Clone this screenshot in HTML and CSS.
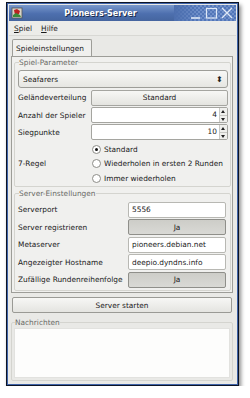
FILE: index.html
```html
<!DOCTYPE html>
<html>
<head>
<meta charset="utf-8">
<link rel="stylesheet" href="styles.css">
</head>
<body>
<div class="window">
  <div class="titlebar">
    <svg class="appicon" width="12" height="12" viewBox="0 0 12 12">
      <rect x="1" y="1" width="10" height="10" fill="#d8d4c8" stroke="#555" stroke-width="0.8"/>
      <path d="M3 3 L6 2 L9 4 L8 7 L4 8 Z" fill="#b22"/>
      <path d="M2 8 L5 6 L9 8 L10 10 L2 10 Z" fill="#3a8a3a"/>
    </svg>
    <span class="title">Pioneers-Server</span>
    <div class="wmbtns">
      <svg width="48" height="14" viewBox="0 0 48 14">
        <path d="M3 12 H12" stroke="#dfe8f6" stroke-width="1.6"/>
        <rect x="18.5" y="2.5" width="10" height="9.5" fill="none" stroke="#dfe8f6" stroke-width="1.2"/>
        <path d="M34 2 L44 12 M44 2 L34 12" stroke="#dfe8f6" stroke-width="1.3"/>
      </svg>
    </div>
  </div>
  <div class="menubar">
    <span class="menu"><u>S</u>piel</span>
    <span class="menu"><u>H</u>ilfe</span>
  </div>
  <div class="main">
    <div class="notebook">
      <div class="tabs"><div class="tab">Spieleinstellungen</div></div>
      <div class="page">
        <fieldset class="frame f1">
          <legend>Spiel-Parameter</legend>
          <div class="combo"><span>Seafarers</span><span class="updown">&#x2B0D;</span></div>
          <div class="grid g1">
            <div class="lbl">Geländeverteilung</div>
            <div class="btn">Standard</div>
            <div class="lbl">Anzahl der Spieler</div>
            <div class="spin"><span class="val">4</span><span class="arr"><i class="up"></i><i class="dn"></i></span></div>
            <div class="lbl">Siegpunkte</div>
            <div class="spin"><span class="val">10</span><span class="arr"><i class="up"></i><i class="dn"></i></span></div>
            <div class="lbl seven">7-Regel</div>
            <div class="radios">
              <div class="radio"><span class="dot on"></span>Standard</div>
              <div class="radio"><span class="dot"></span>Wiederholen in ersten 2 Runden</div>
              <div class="radio"><span class="dot"></span>Immer wiederholen</div>
            </div>
          </div>
        </fieldset>
        <fieldset class="frame f2">
          <legend>Server-Einstellungen</legend>
          <div class="grid g2">
            <div class="lbl">Serverport</div>
            <div class="entry">5556</div>
            <div class="lbl">Server registrieren</div>
            <div class="btn toggled">Ja</div>
            <div class="lbl">Metaserver</div>
            <div class="entry">pioneers.debian.net</div>
            <div class="lbl">Angezeigter Hostname</div>
            <div class="entry">deepio.dyndns.info</div>
            <div class="lbl">Zufällige Rundenreihenfolge</div>
            <div class="btn toggled">Ja</div>
          </div>
        </fieldset>
      </div>
    </div>
    <div class="btn start">Server starten</div>
    <fieldset class="frame msgs">
      <legend>Nachrichten</legend>
      <div class="textarea"></div>
    </fieldset>
  </div>
</div>
</body>
</html>
```

FILE: styles.css
```css
* { box-sizing: border-box; }
html, body { margin: 0; padding: 0; background: #ffffff; }
body {
  padding: 2px 0 0 6px;
  font-family: "DejaVu Sans", sans-serif;
  font-size: 7.4px;
  color: #1a1a1a;
}
.window {
  width: 233px;
  height: 384px;
  border: 1px solid #0c1426;
  box-shadow: inset 0 0 0 1px #3f63a8, 2px 3px 4px rgba(0,0,0,0.45);
  background: #e9e9e6;
  padding: 2px;
  display: flex;
  flex-direction: column;
}
.titlebar {
  height: 16px;
  display: flex;
  align-items: center;
  background: linear-gradient(#7897cb, #4d6fae 55%, #45659f);
  color: #fff;
  padding-left: 2px;
}
.appicon { flex: none; }
.title {
  flex: 1;
  text-align: center;
  font-weight: bold;
  font-size: 8px;
  text-shadow: 1px 1px 0 #1d2c4c;
  padding-left: 4px;
}
.wmbtns {
  flex: none;
  width: 62px;
  height: 16px;
  display: flex;
  justify-content: flex-end;
  align-items: center;
  background:
    linear-gradient(90deg, rgba(77,111,174,1), rgba(77,111,174,0) 40%),
    repeating-conic-gradient(#6f8fca 0 25%, #5276b8 0 50%) 0 0 / 4px 4px;
}
.menubar {
  height: 15px;
  display: flex;
  align-items: center;
  gap: 9px;
  padding-left: 5px;
  background: #ecece9;
  border-bottom: 1px solid #d8d8d4;
}
.menu u { text-decoration: underline; text-underline-offset: 1px; }
.main {
  flex: 1;
  min-width: 0;
  display: flex;
  flex-direction: column;
  padding: 3px 3px 2px 2px;
}
.notebook { display: flex; flex-direction: column; min-width: 0; }
.tabs { display: flex; padding-left: 1px; height: 17px; }
.tab {
  height: 17px;
  padding: 4px 4px 0 3px;
  background: #f0f0ee;
  border: 1px solid #9d9d98;
  border-bottom: none;
  border-radius: 2px 2px 0 0;
  position: relative;
  z-index: 1;
  margin-bottom: -1px;
  width: 80px;
}
.page {
  background: #f0f0ee;
  border: 1px solid #9d9d98;
  padding: 1px 1px 1px 2px;
  display: flex;
  flex-direction: column;
  min-width: 0;
}
.frame {
  margin: 0;
  padding: 2px 2px 2px 3px;
  border: 1px solid #d4d4cf;
  border-radius: 2px;
  min-width: 0;
}
.f1 { padding-bottom: 0; }
.frame legend {
  padding: 0;
  margin-left: 1px;
  color: #6a6a66;
  line-height: 9px;
}
.combo {
  height: 18px;
  margin: 1px 0 1px 0;
  display: flex;
  justify-content: space-between;
  align-items: center;
  padding: 0 4px 0 4px;
  border: 1px solid #9d9d98;
  border-radius: 3px;
  background: linear-gradient(#f8f8f6, #e6e6e2);
}
.updown { font-size: 8px; color: #222; }
.grid {
  display: grid;
  align-items: center;
}
.g1 {
  grid-template-columns: 73px minmax(0, 1fr);
  grid-template-rows: 17px 16px 16px 45px;
  row-gap: 1px;
}
.g2 {
  grid-template-columns: 110px minmax(0, 1fr);
  grid-template-rows: repeat(5, 17px);
  row-gap: 0.5px;
  margin-top: 1px;
  padding-right: 2px;
}
.lbl { white-space: nowrap; }
.btn {
  height: 16px;
  display: flex;
  align-items: center;
  justify-content: center;
  border: 1px solid #a5a5a0;
  border-radius: 2px;
  background: linear-gradient(#f7f7f5, #e4e4e0);
}
.btn.toggled {
  background: linear-gradient(#cdcdc8, #d9d9d5);
  border-color: #8f8f8a;
}
.spin {
  height: 16px;
  display: flex;
  border: 1px solid #a5a5a0;
  border-radius: 2px;
  background: #fff;
}
.spin .val { flex: 1; text-align: right; padding-right: 2px; line-height: 14px; }
.spin .arr {
  width: 8px;
  display: flex;
  flex-direction: column;
  border-left: 1px solid #c8c8c4;
  background: #efefec;
}
.spin i { flex: 1; position: relative; }
.spin i.up::after, .spin i.dn::after {
  content: "";
  position: absolute;
  left: 1px;
  border-left: 2px solid transparent;
  border-right: 2px solid transparent;
}
.spin i.up::after { top: 2px; border-bottom: 3px solid #222; }
.spin i.dn::after { top: 2px; border-top: 3px solid #222; }
.spin i.up { border-bottom: 1px solid #c8c8c4; }
.radios { display: flex; flex-direction: column; gap: 1.5px; padding-left: 1px; }
.radio { display: flex; align-items: center; height: 13px; gap: 3px; white-space: nowrap; }
.dot {
  flex: none;
  width: 9px;
  height: 9px;
  border-radius: 50%;
  border: 1px solid #8d8d88;
  background: #fff;
  position: relative;
}
.dot.on::after {
  content: "";
  position: absolute;
  left: 2px; top: 2px;
  width: 3px; height: 3px;
  border-radius: 50%;
  background: #111;
}
.entry {
  height: 16px;
  border: 1px solid #b8b8b3;
  border-radius: 2px;
  background: #fff;
  padding: 0 3px;
  display: flex;
  align-items: center;
  white-space: nowrap;
  overflow: hidden;
}
.f2 { margin-top: 2px; }
.start {
  margin: 4px 1px 5px 1px;
  height: 16px;
  border-color: #9a9a95;
}
.msgs {
  flex: 1;
  padding: 1px 2px 2px 2px;
  display: flex;
  flex-direction: column;
}
.textarea {
  flex: 1;
  background: #fdfdfc;
  border: 1px solid #e2e2df;
}
```
